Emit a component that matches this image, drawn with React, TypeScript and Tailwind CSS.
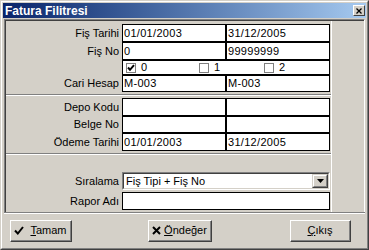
import React from "react";

const font = "font-['Liberation_Sans',Arial,sans-serif]";

function Row({ label, h, children }: { label: string; h: string; children?: React.ReactNode }) {
    return (
        <div className={`flex ${h}`}>
            <div className="w-[116px] pr-[3px] flex items-center justify-end">{label}</div>
            {children}
        </div>
    );
}

function Cell({ text }: { text?: string }) {
    return <div className="w-[104px] border border-black bg-white pl-[1px] flex items-center tracking-[0.3px]">{text}</div>;
}

function Check({ label, checked, w }: { label: string; checked?: boolean; w: string }) {
    return (
        <div className={`flex items-center ${w}`}>
            <div className="ml-[3px] w-[10px] h-[10px] border border-[#808080] bg-white flex items-center justify-center">
                {checked && (
                    <svg width="8" height="8" viewBox="0 0 8 8">
                        <path d="M1 3.5 L3 5.8 L7 1.2" stroke="black" strokeWidth="2" fill="none" />
                    </svg>
                )}
            </div>
            <span className="ml-[5px]">{label}</span>
        </div>
    );
}

function Sep() {
    return <div className="border-t border-t-[#808080] border-b border-b-white" />;
}

function Button({ w, children }: { w: string; children: React.ReactNode }) {
    return (
        <div className={`${w} h-[22px] border border-t-white border-l-white border-r-[#404040] border-b-[#404040]`}>
            <div className="h-full border-r border-b border-[#808080] flex items-center justify-center">{children}</div>
        </div>
    );
}

export default function App() {
    return (
        <div className={`w-[369px] h-[250px] bg-[#d4d0c8] text-[11px] text-black leading-none ${font} border border-t-[#d4d0c8] border-l-[#d4d0c8] border-r-[#404040] border-b-[#404040]`}>
            <div className="h-full border border-t-white border-l-white border-r-[#808080] border-b-[#808080] p-[1px] flex flex-col">
                {/* title bar */}
                <div className="h-[15px] shrink-0 bg-gradient-to-r from-[#0a246a] to-[#a6caf0] flex items-center justify-between pl-[2px] pr-[1px]">
                    <span className="text-white font-bold text-[12px]">Fatura Filitresi</span>
                    <div className="w-[12px] h-[11px] bg-[#d4d0c8] border border-t-white border-l-white border-r-[#404040] border-b-[#404040] flex items-center justify-center">
                        <svg width="6" height="6" viewBox="0 0 6 6">
                            <path d="M0.5 0.5 L5.5 5.5 M5.5 0.5 L0.5 5.5" stroke="black" strokeWidth="1.3" />
                        </svg>
                    </div>
                </div>

                {/* main panel */}
                <div className="mx-[1px] mt-[1px] border-t border-l border-[#808080] border-r border-r-white">
                    <div className="border-t border-l border-[#404040] flex">
                        <div className="w-[326px] border-r border-white pt-[3px] flex flex-col">
                            <Row label="Fiş Tarihi" h="h-[18px]">
                                <Cell text="01/01/2003" />
                                <Cell text="31/12/2005" />
                            </Row>
                            <Row label="Fiş No" h="h-[18px]">
                                <Cell text="0" />
                                <Cell text="99999999" />
                            </Row>
                            <Row label="" h="h-[15px]">
                                <div className="w-[208px] border border-black bg-white flex items-center">
                                    <Check label="0" checked w="w-[73px]" />
                                    <Check label="1" w="w-[65px]" />
                                    <Check label="2" w="w-[65px]" />
                                </div>
                            </Row>
                            <Row label="Cari Hesap" h="h-[17px]">
                                <Cell text="M-003" />
                                <Cell text="M-003" />
                            </Row>

                            <div className="mt-[2px] mb-[2px]">
                                <Sep />
                            </div>

                            <Row label="Depo Kodu" h="h-[18px]">
                                <Cell />
                                <Cell />
                            </Row>
                            <Row label="Belge No" h="h-[17px]">
                                <Cell />
                                <Cell />
                            </Row>
                            <Row label="Ödeme Tarihi" h="h-[18px]">
                                <Cell text="01/01/2003" />
                                <Cell text="31/12/2005" />
                            </Row>

                            <div className="mt-[2px] mb-[17px]">
                                <Sep />
                            </div>

                            <Row label="Sıralama" h="h-[18px]">
                                <div className="w-[208px] border border-t-[#808080] border-l-[#808080] border-r-white border-b-white">
                                    <div className="h-full border border-t-[#404040] border-l-[#404040] border-r-[#d4d0c8] border-b-[#d4d0c8] bg-white flex items-center justify-between">
                                        <span className="pl-[2px]">Fiş Tipi + Fiş No</span>
                                        <div className="w-[16px] h-full bg-[#d4d0c8] border border-t-[#d4d0c8] border-l-[#d4d0c8] border-r-[#404040] border-b-[#404040]">
                                            <div className="h-full border border-t-white border-l-white border-r-[#808080] border-b-[#808080] flex items-center justify-center">
                                                <svg width="7" height="4" viewBox="0 0 7 4">
                                                    <path d="M0 0 H7 L3.5 4 Z" fill="black" />
                                                </svg>
                                            </div>
                                        </div>
                                    </div>
                                </div>
                            </Row>
                            <div className="mt-[2px]">
                                <Row label="Rapor Adı" h="h-[18px]">
                                    <div className="w-[208px] border border-black bg-white" />
                                </Row>
                            </div>
                            <div className="h-[2px]" />
                        </div>
                        <div className="flex-1" />
                    </div>
                </div>
                <div className="mx-[1px]">
                    <Sep />
                </div>

                {/* buttons */}
                <div className="flex mt-[6px]">
                    <div className="ml-[7px]">
                        <Button w="w-[62px]">
                            <svg width="10" height="9" viewBox="0 0 10 9" className="mr-[6px]">
                                <path d="M1 4.5 L3.8 7.5 L9 1" stroke="black" strokeWidth="2" fill="none" />
                            </svg>
                            <span>
                                <span className="underline">T</span>amam
                            </span>
                        </Button>
                    </div>
                    <div className="ml-[76px]">
                        <Button w="w-[64px]">
                            <svg width="9" height="9" viewBox="0 0 9 9" className="mr-[3px]">
                                <path d="M1 1 L8 8 M8 1 L1 8" stroke="black" strokeWidth="2" />
                            </svg>
                            <span>
                                <span className="underline">Ö</span>ndeğer
                            </span>
                        </Button>
                    </div>
                    <div className="ml-[78px]">
                        <Button w="w-[61px]">
                            <span>
                                <span className="underline">Ç</span>ıkış
                            </span>
                        </Button>
                    </div>
                </div>
            </div>
        </div>
    );
}
